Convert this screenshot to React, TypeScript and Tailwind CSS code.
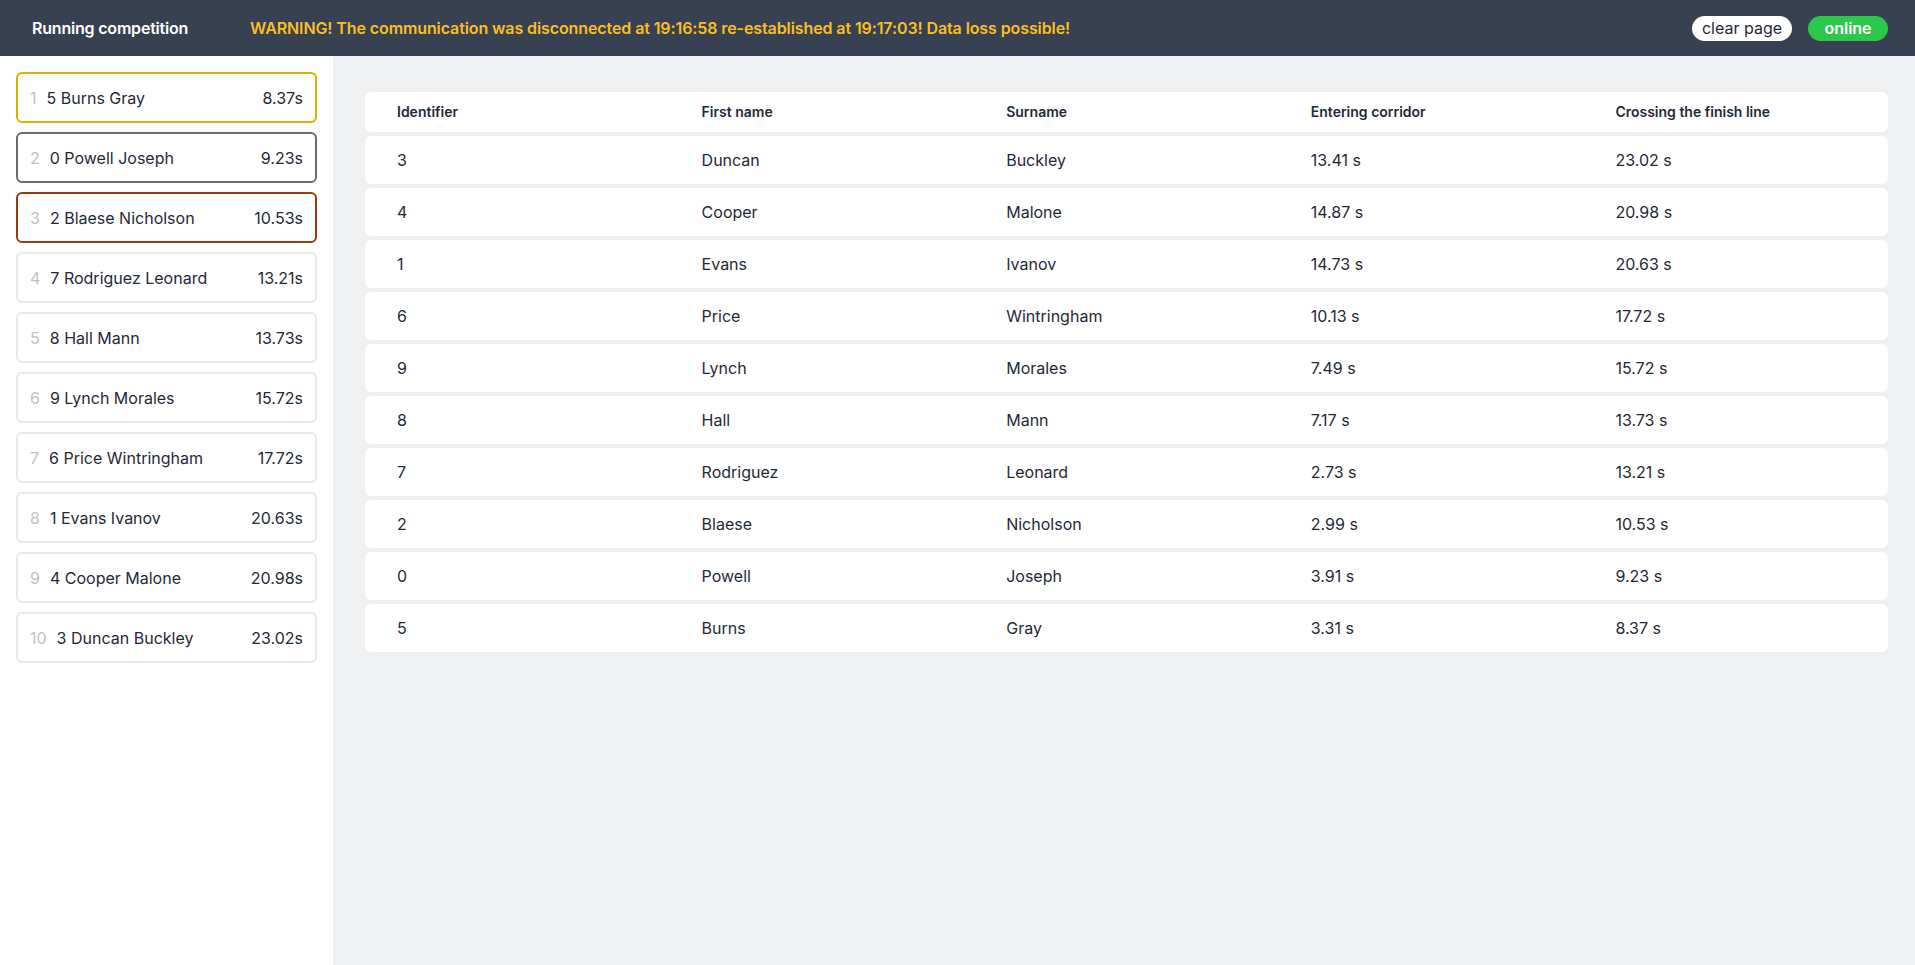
import React from 'react';

type Runner = { id: number; first: string; last: string; corridor: string; finish: string };

const runners: Runner[] = [
  { id: 3, first: 'Duncan', last: 'Buckley', corridor: '13.41', finish: '23.02' },
  { id: 4, first: 'Cooper', last: 'Malone', corridor: '14.87', finish: '20.98' },
  { id: 1, first: 'Evans', last: 'Ivanov', corridor: '14.73', finish: '20.63' },
  { id: 6, first: 'Price', last: 'Wintringham', corridor: '10.13', finish: '17.72' },
  { id: 9, first: 'Lynch', last: 'Morales', corridor: '7.49', finish: '15.72' },
  { id: 8, first: 'Hall', last: 'Mann', corridor: '7.17', finish: '13.73' },
  { id: 7, first: 'Rodriguez', last: 'Leonard', corridor: '2.73', finish: '13.21' },
  { id: 2, first: 'Blaese', last: 'Nicholson', corridor: '2.99', finish: '10.53' },
  { id: 0, first: 'Powell', last: 'Joseph', corridor: '3.91', finish: '9.23' },
  { id: 5, first: 'Burns', last: 'Gray', corridor: '3.31', finish: '8.37' },
];

// ranking = fastest finish first
const ranking = [...runners].reverse();

const podium = ['border-[#e0ae00]', 'border-[#6b6b6b]', 'border-[#9a3a0c]'];

const App: React.FC = () => {
  return (
    <div className="min-h-screen flex flex-col font-['Inter','Noto_Sans',sans-serif] text-[#1f2937]">
      {/* Top bar */}
      <header className="h-14 shrink-0 bg-[#374151] flex items-center pl-8 pr-[27px]">
        <span className="w-[218px] text-white font-semibold text-base tracking-[-0.2px]">Running competition</span>
        <span className="text-[#fbbf24] font-semibold text-base tracking-[-0.1px]">
          WARNING! The communication was disconnected at 19:16:58 re-established at 19:17:03! Data loss possible!
        </span>
        <div className="ml-auto flex items-center gap-4">
          <button className="h-[25px] w-[100px] rounded-full bg-white text-[#1f2937] text-base flex items-center justify-center">
            clear page
          </button>
          <span className="h-[25px] w-[80px] rounded-full bg-[#2cc84a] text-white font-semibold text-base flex items-center justify-center">
            online
          </span>
        </div>
      </header>

      <div className="flex flex-1">
        {/* Ranking */}
        <aside className="w-[333px] shrink-0 bg-white p-4 flex flex-col gap-[9px]">
          {ranking.map((r, i) => (
            <div
              key={r.id}
              className={`h-[51px] rounded-md border-2 px-3 flex items-center text-base ${podium[i] ?? 'border-[#e8e9ec]'}`}
            >
              <span className="text-[#bfc1c5] mr-[10px]">{i + 1}</span>
              <span>
                {r.id} {r.first} {r.last}
              </span>
              <span className="ml-auto">{r.finish}s</span>
            </div>
          ))}
        </aside>

        {/* Results table */}
        <main className="flex-1 bg-[#f0f1f3] pl-8 pr-[27px] pt-9">
          <div className="flex flex-col gap-1">
            <div className="grid grid-cols-5 h-10 items-center bg-white rounded-md text-sm font-semibold">
              <div className="px-8">Identifier</div>
              <div className="px-8">First name</div>
              <div className="px-8">Surname</div>
              <div className="px-8">Entering corridor</div>
              <div className="px-8">Crossing the finish line</div>
            </div>
            {runners.map((r) => (
              <div key={r.id} className="grid grid-cols-5 h-12 items-center bg-white rounded-md text-base">
                <div className="px-8">{r.id}</div>
                <div className="px-8">{r.first}</div>
                <div className="px-8">{r.last}</div>
                <div className="px-8">{r.corridor} s</div>
                <div className="px-8">{r.finish} s</div>
              </div>
            ))}
          </div>
        </main>
      </div>
    </div>
  );
};

export default App;
